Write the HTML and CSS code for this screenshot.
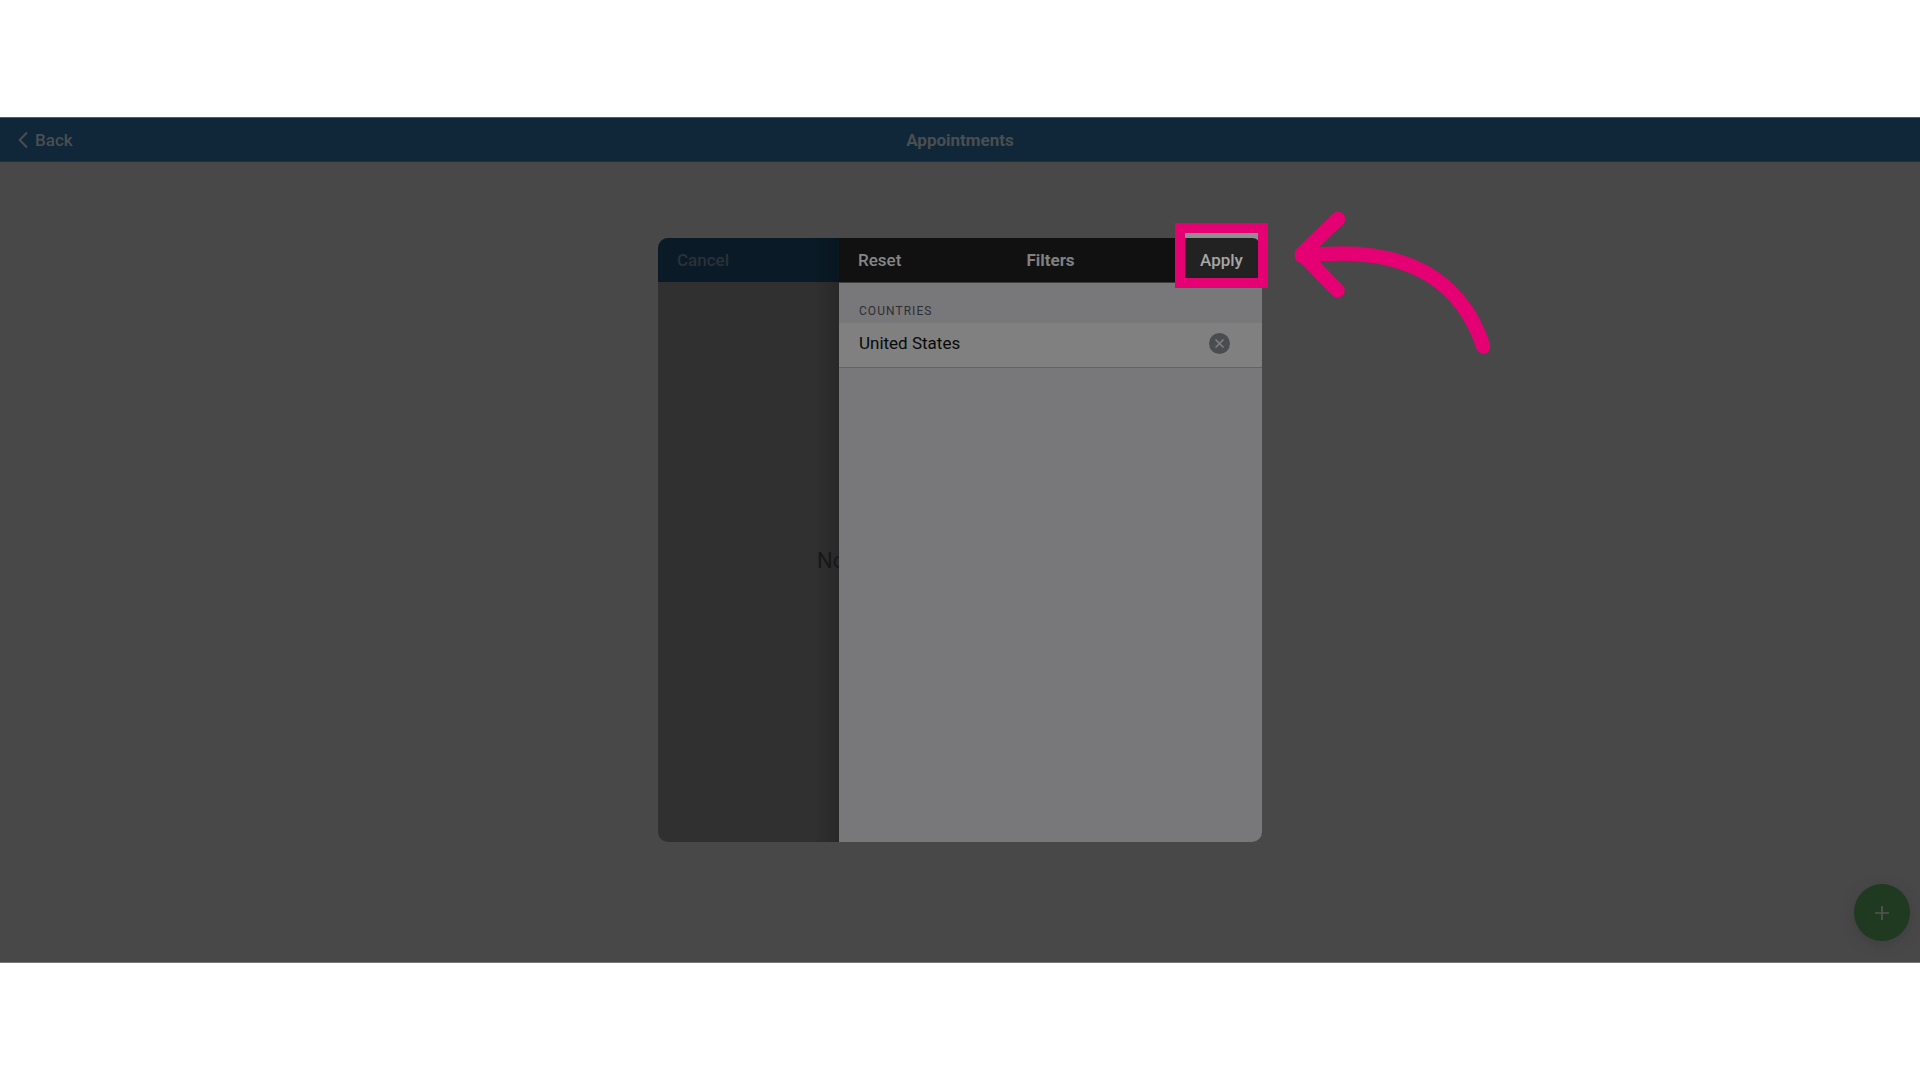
FILE: index.html
```html
<!DOCTYPE html>
<html lang="en">
<head>
<meta charset="utf-8">
<title>Appointments</title>
<link rel="stylesheet" href="styles.css">
</head>
<body>
<main class="app">
  <header class="navbar app-bar">
    <a class="back"><svg class="chevron" width="12" height="18" viewBox="0 0 12 18"><path d="M9 1.5 1.700 9 9 16.500"/></svg>Back</a>
    <h1 class="title">Appointments</h1>
    <span></span>
  </header>
  <section class="modal">
    <div class="page">
      <header class="page-bar">Cancel</header>
      <div class="page-body"><p class="empty">No</p></div>
    </div>
    <aside class="panel">
      <header class="navbar panel-bar">
        <a class="reset">Reset</a>
        <h2 class="title">Filters</h2>
        <span></span>
      </header>
      <h3 class="group">COUNTRIES</h3>
      <div class="row">
        <span>United States</span>
        <svg class="clear" width="21" height="21" viewBox="0 0 20 20"><circle cx="10" cy="10" r="10"/><path d="m6.2 6.2 7.6 7.6m0-7.6-7.6 7.6"/></svg>
      </div>
    </aside>
  </section>
  <button class="fab" aria-label="Add"><svg width="16" height="16" viewBox="0 0 16 16"><path d="M8 1v14M1 8h14"/></svg></button>
</main>
<div class="highlight"><div class="spot">Apply</div></div>
<svg class="arrow" width="200" height="160" viewBox="0 0 200 160"><path d="M48 19 12 53.7 47.5 90.5M12 56C118 43 172 82 193.300 146.500"/></svg>
</body>
</html>
```
FILE: styles.css
```css
* { box-sizing: border-box; }
body {
  margin: 0;
  height: 1080px;
  padding-top: 117px;
  overflow: hidden;
  background: #fff;
  font: 17px/1.2 Roboto, sans-serif;
}
h1, h2, h3, p { margin: 0; }
.app {
  position: relative;
  height: 846px;
  background: #484848;
  border-top: 1px solid #4e5f6c;
  border-bottom: 1px solid #767676;
}
.navbar {
  display: grid;
  grid-template-columns: 1fr auto 1fr;
  align-items: center;
  height: 44px;
}
.title { font-size: 17px; font-weight: 700; }
.app-bar {
  padding-top: 1px;
  background: #0f2738;
  border-bottom: 1px solid #252e35;
  color: #4b4e50;
}
.back {
  display: flex;
  align-items: center;
  gap: 5px;
  padding-left: 18px;
  font-weight: 500;
}
.chevron { fill: none; stroke: #4b4e50; stroke-width: 2; }
.modal {
  display: flex;
  width: 604px;
  height: 604px;
  margin: 76px auto 0;
  border-radius: 10px;
  overflow: hidden;
}
.page {
  display: flex;
  flex-direction: column;
  width: 181px;
  background: linear-gradient(90deg, #303030 155px, #282828);
}
.page-bar {
  height: 44px;
  padding: 12px 19px;
  font-weight: 500;
  color: #293238;
  background: linear-gradient(90deg, #0a1b27 150px, #081620);
}
.page-body {
  flex: 1;
  display: flex;
  align-items: center;
  padding: 0 0 2px 159px;
  overflow: hidden;
}
.empty {
  font-size: 22px;
  color: #15181a;
  white-space: nowrap;
}
.panel {
  width: 423px;
  background: #78787b;
}
.panel-bar {
  height: 45px;
  padding: 0 19px;
  background: #111;
  border-bottom: 1px solid #3c3c3d;
  color: #808080;
}
.reset { font-weight: 500; color: #868686; }
.group {
  height: 40px;
  padding: 21px 20px 0;
  font-size: 12px;
  line-height: 15px;
  font-weight: 400;
  letter-spacing: 1.05px;
  color: #2e2e32;
}
.row {
  display: flex;
  align-items: center;
  justify-content: space-between;
  height: 45px;
  padding: 0 32px 3px 20px;
  background: #808080;
  border-bottom: 1px solid #646465;
  color: #090909;
}
.clear circle { fill: #4a4c50; }
.clear path { stroke: #808080; stroke-width: 1.5; }
.fab {
  position: absolute;
  right: 10px;
  bottom: 21px;
  display: grid;
  place-items: center;
  width: 56px;
  height: 57px;
  padding: 0;
  border: 0;
  border-radius: 50%;
  background: #1f3a20;
  box-shadow: 0 3px 12px #3f3f42;
}
.fab path { stroke: #505652; stroke-width: 1.7; }
.highlight {
  position: absolute;
  left: 1175px;
  top: 223px;
  width: 93px;
  height: 65px;
  padding-top: 5px;
  border: 10px solid #e50073;
  background: #909090;
}
.spot {
  height: 40px;
  padding: 12px 0 0 15px;
  border-top-right-radius: 6px 3px;
  background: #222;
  color: #a6a6a6;
  font-weight: 500;
}
.arrow {
  position: absolute;
  left: 1290px;
  top: 200px;
  fill: none;
  stroke: #e50073;
  stroke-width: 14.5;
  stroke-linecap: round;
  stroke-linejoin: round;
}
```
